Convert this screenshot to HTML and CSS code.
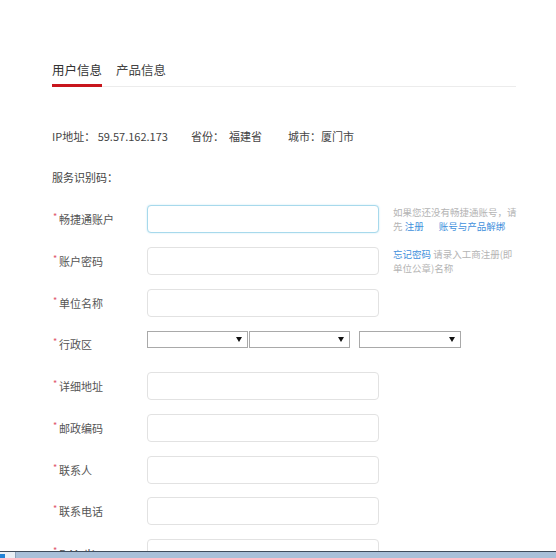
FILE: index.html
```html
<!DOCTYPE html>
<html lang="zh-CN">
<head>
<meta charset="utf-8">
<title>用户信息</title>
<link rel="stylesheet" href="styles.css">
</head>
<body>
<div class="page">
  <div class="tabs">
    <div class="tab active">用户信息</div>
    <div class="tab">产品信息</div>
  </div>

  <div class="info">
    <span class="ip">IP地址： 59.57.162.173</span>
    <span class="prov">省份：  福建省</span>
    <span class="city">城市：厦门市</span>
  </div>

  <div class="code">服务识别码：</div>

  <div class="form">
    <div class="row">
      <label class="label"><i>*</i>畅捷通账户</label>
      <div class="input focus"></div>
      <div class="hint">如果您还没有畅捷通账号，请<br>先 <a class="link">注册</a><span class="sp"></span><a class="link">账号与产品解绑</a></div>
    </div>
    <div class="row">
      <label class="label"><i>*</i>账户密码</label>
      <div class="input"></div>
      <div class="hint"><a class="link">忘记密码</a> 请录入工商注册(即<br>单位公章)名称</div>
    </div>
    <div class="row">
      <label class="label"><i>*</i>单位名称</label>
      <div class="input"></div>
    </div>
    <div class="row">
      <label class="label"><i>*</i>行政区</label>
      <div class="selects">
        <div class="select s1"><span class="arrow"></span></div>
        <div class="select s2"><span class="arrow"></span></div>
        <div class="select s3"><span class="arrow"></span></div>
      </div>
    </div>
    <div class="row">
      <label class="label"><i>*</i>详细地址</label>
      <div class="input"></div>
    </div>
    <div class="row">
      <label class="label"><i>*</i>邮政编码</label>
      <div class="input"></div>
    </div>
    <div class="row">
      <label class="label"><i>*</i>联系人</label>
      <div class="input"></div>
    </div>
    <div class="row">
      <label class="label"><i>*</i>联系电话</label>
      <div class="input"></div>
    </div>
    <div class="row">
      <label class="label"><i>*</i>E-Mail：</label>
      <div class="input"></div>
    </div>
  </div>
</div>

<div class="bottombar"><div class="corner"><span class="blue"></span></div></div>
</body>
</html>
```

FILE: styles.css
```css
html, body {
  margin: 0;
  padding: 0;
  background: #fff;
  overflow: hidden;
  height: 558px;
}
body {
  font-family: "Noto Sans CJK SC", "Microsoft YaHei", sans-serif;
  color: #555;
}
.page {
  padding: 62px 0 0 52px;
  width: 464px;
}
.tabs {
  display: flex;
  align-items: flex-start;
  gap: 14px;
  border-bottom: 1px solid #ececec;
}
.tab {
  font-size: 12.5px;
  line-height: 16px;
  color: #444;
  padding-bottom: 6px;
  border-bottom: 3px solid transparent;
  margin-bottom: -1px;
  width: 50px;
  white-space: nowrap;
}
.tab.active {
  border-bottom-color: #c8161d;
  color: #333;
}
.info {
  margin-top: 41px;
  font-size: 11px;
  line-height: 16px;
  display: flex;
  white-space: pre;
  color: #444;
}
.ip { width: 139px; }
.prov { width: 97px; }
.code {
  margin-top: 25px;
  font-size: 11px;
  line-height: 16px;
  color: #444;
}
.form {
  margin-top: 20px;
  display: flex;
  flex-direction: column;
  gap: 13.75px;
}
.row {
  display: grid;
  grid-template-columns: 95px 232px 140px;
  height: 28px;
}
.label {
  font-size: 11px;
  line-height: 28px;
  color: #555;
  white-space: nowrap;
}
.label i {
  font-style: normal;
  color: #e0566a;
  font-size: 9px;
  display: inline-block;
  width: 6px;
  padding-left: 1px;
  vertical-align: top;
  line-height: 24px;
}
.input {
  height: 28px;
  box-sizing: border-box;
  border: 1px solid #e2e2e2;
  border-radius: 4px;
  background: #fff;
}
.input.focus {
  border-color: #a7d9ec;
  box-shadow: 0 0 2px #c3e6f2;
}
.hint {
  padding-left: 14px;
  font-size: 9.5px;
  line-height: 14px;
  color: #b4b4b4;
  white-space: nowrap;
}
.link {
  color: #3f90dc;
}
.sp {
  display: inline-block;
  width: 15px;
}
.selects {
  grid-column: 2 / 4;
  display: flex;
  padding-top: 1px;
  align-items: flex-start;
}
.select {
  height: 17px;
  box-sizing: border-box;
  border: 1px solid #a9a9a9;
  background: #fff;
  display: flex;
  justify-content: flex-end;
  align-items: center;
  padding-right: 5px;
}
.s1 { width: 101px; }
.s2 { width: 101px; margin-left: 1px; }
.s3 { width: 102px; margin-left: 9px; }
.arrow {
  width: 0;
  height: 0;
  border-left: 3px solid transparent;
  border-right: 3px solid transparent;
  border-top: 5px solid #111;
}
.bottombar {
  position: fixed;
  left: 0;
  right: 0;
  bottom: 0;
  height: 6px;
  border-top: 1px solid #3f4c5c;
  background: #a9c0d9;
}
.corner {
  width: 15px;
  height: 6px;
  background: #e9eff6;
  border-right: 1px solid #8aa2bb;
  position: relative;
}
.blue {
  position: absolute;
  left: 0;
  bottom: 0;
  width: 5px;
  height: 4px;
  background: #2383d8;
}
```
